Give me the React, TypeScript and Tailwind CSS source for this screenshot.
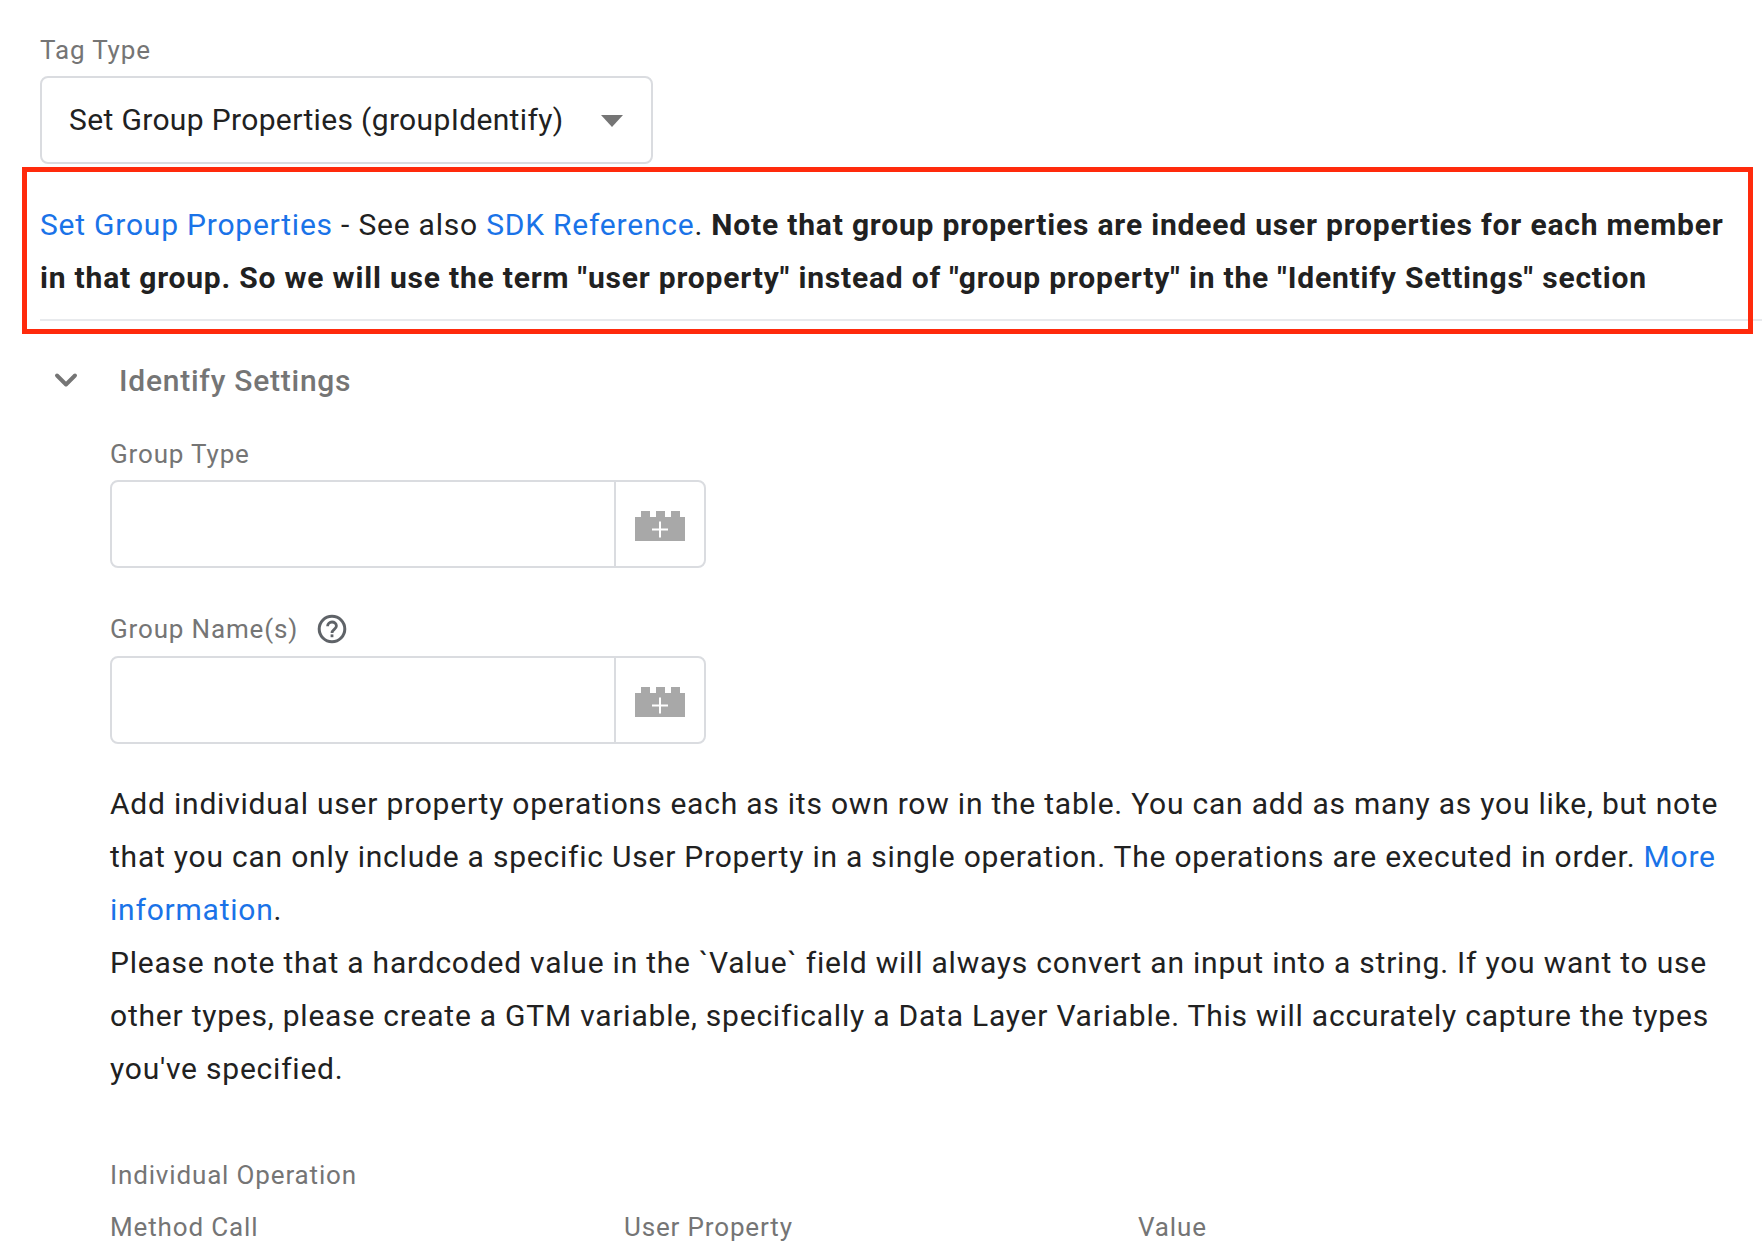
import { ChevronDown } from "lucide-react";

function BrickIcon() {
  return (
    <svg width="50" height="30" viewBox="0 0 50 30" fill="none">
      <path d="M0 6H6V0H15V6H21V0H30V6H36V0H45V6H50V30H0Z" fill="#a8a8a8" />
      <path d="M17 18.5H33M25 10.5V26.5" stroke="#fff" strokeWidth="2" />
    </svg>
  );
}

function HelpIcon() {
  return (
    <svg width="30" height="30" viewBox="0 0 30 30" fill="none">
      <circle cx="15" cy="15" r="12.8" stroke="#5f6368" strokeWidth="3" />
      <path d="M10.6 12.2c0-2.5 2-4.2 4.4-4.2s4.400 1.700 4.400 4c0 3.300-4.400 3.500-4.400 7" stroke="#5f6368" strokeWidth="2.8" />
      <rect x="13.600" y="20.400" width="2.800" height="2.800" fill="#5f6368" />
    </svg>
  );
}

function VariableField() {
  return (
    <div className="flex h-[88px] w-[596px] rounded-lg border-2 border-[#dadce0]">
      <div className="flex-1" />
      <div className="flex w-[90px] items-center justify-center border-l-2 border-[#dadce0] pt-[3px]">
        <BrickIcon />
      </div>
    </div>
  );
}

const linkClass = "text-[#1a73e8]";
const labelClass = "text-[26px] leading-[36px] tracking-[0.85px] text-[#757575]";

export default function App() {
  return (
    <div className="relative h-[1244px] overflow-hidden bg-white pl-[40px] font-['Roboto',sans-serif] text-[30px] leading-[53px] tracking-[0.78px] text-[#212121]">
      <div className={`pt-[32px] ${labelClass}`}>Tag Type</div>
      <div className="mt-[8px] flex h-[88px] w-[613px] items-center justify-between rounded-lg border-2 border-[#dadce0] pb-[2px] pl-[27px] pr-[28px]">
        <span className="tracking-[0.35px]">Set Group Properties (groupIdentify)</span>
        <span className="mt-[3px] h-0 w-0 border-x-[11px] border-t-[12px] border-x-transparent border-t-[#757575]" />
      </div>

      <div className="mt-[34px] border-b-2 border-[#e8eaed] pb-[15px]">
        <p className="w-[1700px]">
          <a className={linkClass}>Set Group Properties</a> - See also <a className={linkClass}>SDK Reference</a>.{" "}
          <b className="font-bold tracking-[0.8px]">
            Note that group properties are indeed user properties for each member in that group. So we will use the term "user property" instead of "group property" in the "Identify Settings" section
          </b>
        </p>
      </div>

      <div className="mt-[33px] flex h-[53px] items-center">
        <ChevronDown className="ml-[8px] mb-[2px] h-[36px] w-[36px] text-[#757575]" strokeWidth={2.6} />
        <span className="ml-[35px] font-medium tracking-[0.75px] text-[#757575]">Identify Settings</span>
      </div>

      <div className="pl-[70px]">
        <div className={`mt-[29px] ${labelClass}`}>Group Type</div>
        <div className="mt-[8px]">
          <VariableField />
        </div>
        <div className={`mt-[43px] flex items-center gap-[19px] ${labelClass}`}>
          <span>Group Name(s)</span>
          <HelpIcon />
        </div>
        <div className="mt-[9px]">
          <VariableField />
        </div>
        <p className="mt-[33px] w-[1640px]">
          Add individual user property operations each as its own row in the table. You can add as many as you like, but note that you can only include a specific User Property in a single operation. The operations are executed in order.{" "}
          <a className={linkClass}>More information</a>.
          <br />
          Please note that a hardcoded value in the `Value` field will always convert an input into a string. If you want to use other types, please create a GTM variable, specifically a Data Layer Variable. This will accurately capture the types you've specified.
        </p>
        <div className={`mt-[62px] ${labelClass}`}>Individual Operation</div>
        <div className={`mt-[16px] grid w-[1542px] grid-cols-3 ${labelClass}`}>
          <span>Method Call</span>
          <span>User Property</span>
          <span>Value</span>
        </div>
      </div>

      {/* red annotation drawn over the notice */}
      <div className="absolute left-[22px] top-[167px] h-[167px] w-[1731px] border-[5px] border-[#ff2a0c]" />
    </div>
  );
}
